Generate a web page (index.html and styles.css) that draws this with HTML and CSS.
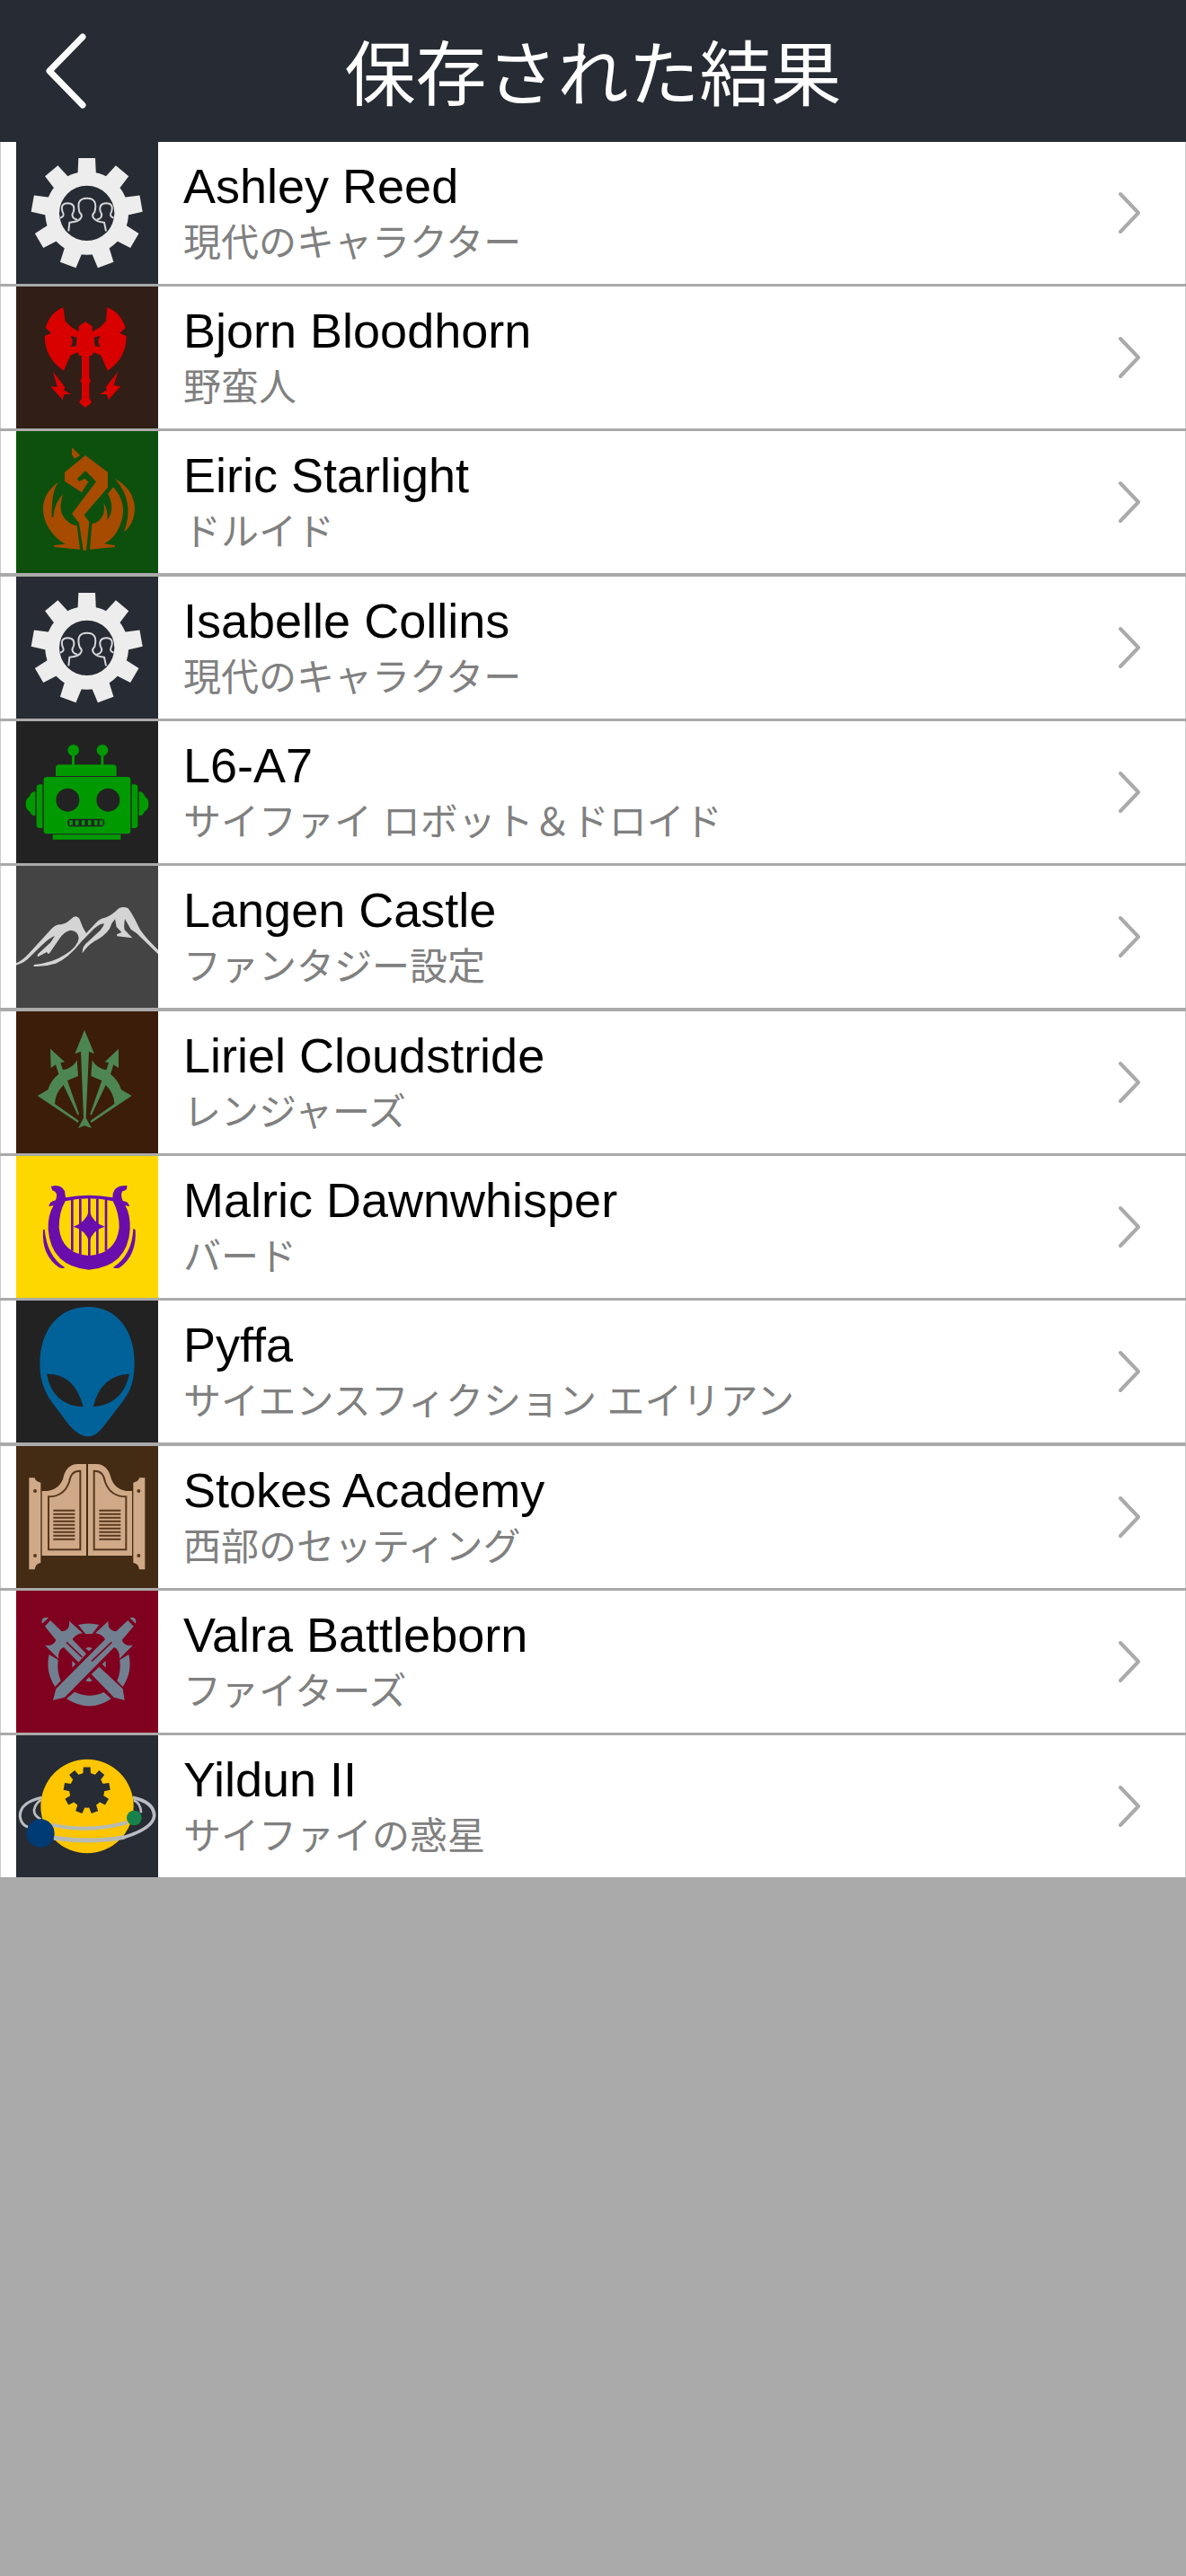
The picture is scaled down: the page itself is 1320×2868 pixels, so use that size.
FILE: index.html
```
<!DOCTYPE html>
<html lang="ja">
<head>
    <meta charset="UTF-8">
    <meta name="viewport" content="width=device-width, initial-scale=1.0">
    <title>保存された結果</title>
    <link rel="stylesheet" href="styles.css">
</head>
<body>
    <!-- Shared shapes -->
    <svg class="defs" width="0" height="0" aria-hidden="true">
        <symbol id="chevron" viewBox="0 0 24 48">
            <path d="M2 3L22 24L2 45" fill="none" stroke="currentColor" stroke-width="4" stroke-linecap="round" stroke-linejoin="round"/>
        </symbol>
        <g id="tooth"><path d="M-31-120L-28-184H28L31-120Z"/></g>
        <g id="teeth">
            <use href="#tooth"/>
            <use href="#tooth" transform="rotate(40)"/>
            <use href="#tooth" transform="rotate(80)"/>
            <use href="#tooth" transform="rotate(120)"/>
            <use href="#tooth" transform="rotate(160)"/>
            <use href="#tooth" transform="rotate(200)"/>
            <use href="#tooth" transform="rotate(240)"/>
            <use href="#tooth" transform="rotate(280)"/>
            <use href="#tooth" transform="rotate(320)"/>
            <circle r="139"/>
        </g>
        <symbol id="modern" viewBox="54 24 474 474">
            <use href="#teeth" transform="translate(290 262)" fill="#ededed"/>
            <circle cx="290" cy="262" r="92" fill="#272b33"/>
            <g fill="none" stroke="#d5d8db" stroke-width="6" stroke-linejoin="round">
                <path d="M229 322L232 293Q266 291 272 274Q274 266 266 260Q252 212 290 212Q328 212 316 258Q304 270 314 280Q324 291 348 293L354 322"/>
                <path d="M201 278Q218 273 209 258Q200 229 226 229Q252 229 246 256Q236 272 248 280L258 284"/>
                <path d="M380 278Q363 273 372 258Q381 229 355 229Q329 229 335 256Q345 272 333 280L323 284"/>
            </g>
        </symbol>
    </svg>

    <header class="header">
        <button class="back-btn" type="button" aria-label="戻る">
            <svg viewBox="0 0 48 84" aria-hidden="true">
                <path d="M43 4L6 42L43 80" fill="none" stroke="currentColor" stroke-width="7" stroke-linecap="round" stroke-linejoin="round"/>
            </svg>
        </button>
        <h1>保存された結果</h1>
    </header>

    <main>
        <ul class="results">
            <li>
                <a class="row" href="#ashley-reed">
                    <svg class="thumb modern" aria-hidden="true"><use href="#modern"/></svg>
                    <span class="text">
                        <span class="name">Ashley Reed</span>
                        <span class="type">現代のキャラクター</span>
                    </span>
                    <svg class="chevron" aria-hidden="true"><use href="#chevron"/></svg>
                </a>
            </li>
            <li>
                <a class="row" href="#bjorn-bloodhorn">
                    <svg class="thumb barbarian" viewBox="54 12 474 474" aria-hidden="true">
                        <g fill="#d90000">
                            <path d="M285 129L308 145V163L334 148L354 128L358 82Q402 98 419 150L400 168L422 177Q422 253 359 293L337 242L313 232L306 243H298V318L303 326L298 336V385L306 400L285 416L264 400L273 385V336L268 326L273 318V243H266L258 232L235 242L213 293Q150 253 149 177L171 168L152 150Q168 98 211 82L218 128L239 148L263 163V145Z"/>
                            <path d="M177 296L217 348L213 358L238 372L215 371L209 390L168 345L191 348Z"/>
                            <path d="M394 296L380 342L403 345L362 390L356 371L332 372L357 358L353 348Z"/>
                        </g>
                        <path d="M235 176L257 182L254 211L235 214Q249 195 235 176ZM335 176L314 182L317 211L335 214Q321 195 335 176Z" fill="#301e17"/>
                    </svg>
                    <span class="text">
                        <span class="name">Bjorn Bloodhorn</span>
                        <span class="type">野蛮人</span>
                    </span>
                    <svg class="chevron" aria-hidden="true"><use href="#chevron"/></svg>
                </a>
            </li>
            <li>
                <a class="row" href="#eiric-starlight">
                    <svg class="thumb druid" viewBox="54 15 474 474" aria-hidden="true">
                        <g fill="#a64b00">
                            <path d="M285 96L360 152V203L281 295L298 319L288 413H278L264 322L240 291L321 184L285 147L258 174L264 183L283 173L295 184L273 220L216 182V152Z"/>
                            <path d="M240 70L268 96L249 107L240 94Z"/>
                            <path d="M195 185Q171 216 173 302H178Q181 254 211 225Q192 276 216 307Q232 327 257 331L267 410L181 402V396L219 392C151 355 103 250 195 185Z"/>
                            <path d="M378 202Q423 252 407 310Q393 367 348 391L384 397V402L300 410L307 325Q334 319 345 293Q350 276 346 254Q360 277 359 313Q386 269 360 224Z"/>
                            <path d="M384 174Q445 208 450 269Q450 322 414 352Q434 298 425 254Q417 212 384 174Z"/>
                        </g>
                    </svg>
                    <span class="text">
                        <span class="name">Eiric Starlight</span>
                        <span class="type">ドルイド</span>
                    </span>
                    <svg class="chevron" aria-hidden="true"><use href="#chevron"/></svg>
                </a>
            </li>
            <li>
                <a class="row" href="#isabelle-collins">
                    <svg class="thumb modern" aria-hidden="true"><use href="#modern"/></svg>
                    <span class="text">
                        <span class="name">Isabelle Collins</span>
                        <span class="type">現代のキャラクター</span>
                    </span>
                    <svg class="chevron" aria-hidden="true"><use href="#chevron"/></svg>
                </a>
            </li>
            <li>
                <a class="row" href="#l6-a7">
                    <svg class="thumb robot" viewBox="54 24 474 474" aria-hidden="true">
                        <g fill="#009a00">
                            <circle cx="245" cy="121" r="19"/>
                            <circle cx="342" cy="121" r="19"/>
                            <path d="M240 130H249V172H240ZM337 130H346V172H337Z"/>
                            <path d="M186 207V180Q186 169 197 169H378Q389 169 389 180V207Z"/>
                            <rect x="146" y="210" width="290" height="190" rx="10"/>
                            <path d="M142 235V381H133Q122 381 122 370V246Q122 235 133 235ZM440 235V381H449Q460 381 460 370V246Q460 235 449 235Z"/>
                            <path d="M118 259V339Q104 341 99 325Q86 320 86 300Q86 282 98 276Q103 259 118 259ZM464 259V339Q478 341 483 325Q496 320 496 300Q496 282 484 276Q479 259 464 259Z"/>
                            <path d="M176 403H403V419H176Z"/>
                        </g>
                        <g fill="#222">
                            <circle cx="226" cy="287" r="39"/>
                            <circle cx="361" cy="287" r="39"/>
                            <rect x="225" y="350" width="124" height="26" rx="12"/>
                        </g>
                        <path d="M237 355V371M257 355V371M278 355V371M299 355V371M320 355V371M338 355V371" stroke="#009a00" stroke-width="11"/>
                    </svg>
                    <span class="text">
                        <span class="name">L6-A7</span>
                        <span class="type">サイファイ ロボット＆ドロイド</span>
                    </span>
                    <svg class="chevron" aria-hidden="true"><use href="#chevron"/></svg>
                </a>
            </li>
            <li>
                <a class="row" href="#langen-castle">
                    <svg class="thumb setting" viewBox="54 12 474 474" aria-hidden="true">
                        <path d="M50 338Q73 331 98 303L173 221Q188 207 204 208Q220 206 237 190Q253 172 265 188L277 218L288 237L319 204Q333 188 355 184Q373 177 397 154Q411 146 427 153Q445 176 462 214Q474 241 528 293V307L456 237L437 224L417 189Q413 211 416 226L442 253L391 247L390 241L406 234L389 216L384 190Q372 202 366 222Q350 246 315 264Q291 279 275 304Q274 280 292 267L335 227Q347 213 347 205Q334 204 313 223L272 265Q226 323 186 338Q148 350 112 348L114 342Q174 337 215 310Q260 282 263 254Q261 228 235 227Q213 232 197 257L168 300L162 307L156 300L128 315Q119 313 134 300L169 268L183 246Q165 252 137 280L91 325Q70 342 50 344Z" fill="#d4d4d4"/>
                    </svg>
                    <span class="text">
                        <span class="name">Langen Castle</span>
                        <span class="type">ファンタジー設定</span>
                    </span>
                    <svg class="chevron" aria-hidden="true"><use href="#chevron"/></svg>
                </a>
            </li>
            <li>
                <a class="row" href="#liriel-cloudstride">
                    <svg class="thumb ranger" viewBox="54 18 474 474" aria-hidden="true">
                        <g fill="#4e8653">
                            <path d="M282 80L315 160L297 152L287 374L306 408L282 400L261 408L279 374L270 152L250 160Z"/>
                            <path d="M168 143L216 187L202 190L210 214Q245 207 257 181L261 234L225 249L264 361L260 365L212 264Q184 291 183 327L263 383L260 390L125 300L160 280Q170 247 196 228L186 196L170 207Z"/>
                            <path d="M396 143L350 187L363 190L355 214Q320 207 308 181L304 234L340 249L301 361L305 365L353 264Q381 291 382 327L302 383L305 390L440 300L405 280Q395 247 369 228L379 196L396 207Z"/>
                        </g>
                    </svg>
                    <span class="text">
                        <span class="name">Liriel Cloudstride</span>
                        <span class="type">レンジャーズ</span>
                    </span>
                    <svg class="chevron" aria-hidden="true"><use href="#chevron"/></svg>
                </a>
            </li>
            <li>
                <a class="row" href="#malric-dawnwhisper">
                    <svg class="thumb bard" viewBox="54 21 474 474" aria-hidden="true">
                        <g fill="#6a0dad">
                            <path d="M170 123Q202 112 216 139L219 160Q297 145 376 160Q376 117 424 120Q427 137 410 138Q400 148 410 171Q431 174 432 190L418 186Q436 217 434 266Q426 389 297 401Q170 389 161 266Q159 219 179 186L163 190Q164 174 186 169Q197 143 175 136ZM218 172Q197 209 197 260Q206 347 297 354Q388 347 398 260Q398 211 377 172Q297 153 218 172Z" fill-rule="evenodd"/>
                            <path d="M298 202Q308 244 350 257Q309 268 298 308Q286 268 245 257Q287 244 298 202Z"/>
                            <path d="M149 266Q157 356 216 393Q215 398 198 394Q138 354 144 268ZM445 264Q441 352 378 393Q379 398 398 395Q458 353 452 267Z"/>
                        </g>
                        <path d="M241 166V338M268 164V350M298 160V354M325 164V350M354 166V338" stroke="#6a0dad" stroke-width="8"/>
                    </svg>
                    <span class="text">
                        <span class="name">Malric Dawnwhisper</span>
                        <span class="type">バード</span>
                    </span>
                    <svg class="chevron" aria-hidden="true"><use href="#chevron"/></svg>
                </a>
            </li>
            <li>
                <a class="row" href="#pyffa">
                    <svg class="thumb alien" viewBox="54 9 474 474" aria-hidden="true">
                        <path d="M291 30C390 28 449 110 449 215C448 280 437 309 408 348L349 425Q322 463 294 463Q263 462 231 425L173 348C146 309 133 271 133 220C134 110 193 32 291 30Z" fill="#006298"/>
                        <path d="M156 254Q250 253 278 364Q175 359 156 254ZM432 254Q337 257 311 364Q411 355 432 254Z" fill="#222"/>
                    </svg>
                    <span class="text">
                        <span class="name">Pyffa</span>
                        <span class="type">サイエンスフィクション エイリアン</span>
                    </span>
                    <svg class="chevron" aria-hidden="true"><use href="#chevron"/></svg>
                </a>
            </li>
            <li>
                <a class="row" href="#stokes-academy">
                    <svg class="thumb western" viewBox="54 15 474 474" aria-hidden="true">
                        <g fill="#d0aa88">
                            <path d="M97 121H116Q118 134 136 137V405Q118 407 116 427H97ZM484 121H465Q463 134 445 137V405Q463 407 465 427H484Z"/>
                            <path d="M140 165Q191 169 210 126Q220 75 260 75H288V381H140ZM441 165Q390 169 372 126Q360 75 322 75H294V381H441Z"/>
                        </g>
                        <g fill="none" stroke="#58381d" stroke-width="6">
                            <path d="M162 361V184Q214 184 231 135Q237 96 268 98V361Z"/>
                            <path d="M421 361V184Q369 184 351 135Q345 96 314 98V361Z"/>
                            <path d="M178 230H250M178 242H250M178 254H250M178 266H250M178 278H250M178 290H250M178 302H250M178 314H250M178 326H250"/>
                            <path d="M331 230H403M331 242H403M331 254H403M331 266H403M331 278H403M331 290H403M331 302H403M331 314H403M331 326H403"/>
                        </g>
                        <g fill="#58381d">
                            <circle cx="117" cy="165" r="6"/>
                            <circle cx="463" cy="165" r="6"/>
                            <circle cx="117" cy="381" r="6"/>
                            <circle cx="463" cy="381" r="6"/>
                        </g>
                    </svg>
                    <span class="text">
                        <span class="name">Stokes Academy</span>
                        <span class="type">西部のセッティング</span>
                    </span>
                    <svg class="chevron" aria-hidden="true"><use href="#chevron"/></svg>
                </a>
            </li>
            <li>
                <a class="row" href="#valra-battleborn">
                    <svg class="thumb fighter" viewBox="54 18 474 474" aria-hidden="true">
                        <g fill="#708090">
                            <path d="M261 132Q296 123 331 132L308 162H285ZM164 231L194 249Q189 286 203 319L184 339Q151 289 164 231ZM430 231L400 249Q405 286 391 319L410 339Q443 289 430 231ZM222 379L249 356Q299 380 347 357L371 379Q300 428 222 379Z"/>
                            <path d="M286 211Q297 203 308 211L297 220ZM286 318Q297 326 308 318L297 307ZM241 252L253 263L241 275ZM353 252L341 263L353 275Z"/>
                            <path d="M168 117L206 154Q235 151 231 119L276 160Q252 163 242 181L288 229L262 257L213 207Q192 215 195 245L150 200Q177 206 187 183L150 137ZM331 272L410 346L416 384L380 374L305 297Z"/>
                            <path d="M427 117L388 154Q358 151 362 119L318 160Q341 163 351 181L187 346L177 384L216 374L381 207Q401 215 399 245L444 200Q417 206 407 183L446 137Z"/>
                            <path d="M141 128L162 109Q149 104 142 112Q138 119 141 128ZM433 109L453 128Q456 119 451 112Q444 105 433 109Z"/>
                        </g>
                        <path d="M222 190L274 240M373 190L306 254" stroke="#80001f" stroke-width="5"/>
                    </svg>
                    <span class="text">
                        <span class="name">Valra Battleborn</span>
                        <span class="type">ファイターズ</span>
                    </span>
                    <svg class="chevron" aria-hidden="true"><use href="#chevron"/></svg>
                </a>
            </li>
            <li>
                <a class="row" href="#yildun-ii">
                    <svg class="thumb planet" viewBox="54 21 474 474" aria-hidden="true">
                        <g fill="none" stroke="#b9bdc3">
                            <path d="M140 229Q65 246 67 292Q70 320 94 328" stroke-width="9"/>
                            <path d="M137 236Q109 257 115 281Q121 294 137 302" stroke-width="8"/>
                            <path d="M443 229Q515 244 515 290Q511 333 410 363" stroke-width="11"/>
                            <path d="M446 238Q470 247 471 280" stroke-width="8"/>
                        </g>
                        <ellipse cx="291" cy="258" rx="155" ry="157" fill="#ffc600"/>
                        <path d="M174 319Q290 349 425 312" fill="none" stroke="#b6bab3" stroke-width="12"/>
                        <path d="M180 364Q304 382 415 361" fill="none" stroke="#b6bab3" stroke-width="15"/>
                        <circle cx="135" cy="348" r="47" fill="#003b75"/>
                        <circle cx="448" cy="297" r="25" fill="#17834b"/>
                        <use href="#teeth" transform="translate(290 205) scale(.42)" fill="#272b33"/>
                    </svg>
                    <span class="text">
                        <span class="name">Yildun II</span>
                        <span class="type">サイファイの惑星</span>
                    </span>
                    <svg class="chevron" aria-hidden="true"><use href="#chevron"/></svg>
                </a>
            </li>
        </ul>
    </main>
</body>
</html>
```

FILE: styles.css
```
* {
    box-sizing: border-box;
}
body {
    margin: 0;
    background: #aaaaaa;
    font-family: "Liberation Sans", "Noto Sans CJK JP", sans-serif;
}
.defs {
    position: absolute;
}
.header {
    display: grid;
    grid-template-columns: 148px 1fr 148px;
    align-items: center;
    height: 158px;
    background: #272b33;
    color: white;
}
.header h1 {
    margin: 0;
    padding-top: 12px;
    font-size: 79px;
    font-weight: 400;
    line-height: 100px;
    text-align: center;
}
.back-btn {
    display: flex;
    align-items: center;
    height: 100%;
    padding: 0 49px;
    border: none;
    background: none;
    color: inherit;
    cursor: pointer;
}
.back-btn svg {
    width: 48px;
    height: 84px;
}
.results {
    margin: 0;
    padding: 0;
    list-style: none;
}
.results li {
    margin-bottom: 3px;
}
.results li:nth-child(3n) {
    margin-bottom: 4px;
}
.row {
    display: flex;
    align-items: center;
    padding: 0 50px 0 17px;
    border: solid #cccccc;
    border-width: 0 1px;
    background: white;
    color: black;
    text-decoration: none;
}
.thumb {
    flex: none;
    width: 158px;
    height: 158px;
}
.text {
    flex: 1;
    display: flex;
    flex-direction: column;
    padding: 3px 0 0 28px;
}
.name {
    font-size: 54px;
    line-height: 64px;
}
.type {
    color: #808080;
    font-size: 42px;
    line-height: 64px;
}
.chevron {
    flex: none;
    width: 24px;
    height: 48px;
    color: #aaaaaa;
}

/* Thumbnail backgrounds */
.modern,
.planet {
    background: #272b33;
}
.barbarian {
    background: #301e17;
}
.druid {
    background: #0d500d;
}
.robot,
.alien {
    background: #222222;
}
.setting {
    background: #444444;
}
.ranger {
    background: #3b1d09;
}
.bard {
    background: #ffd700;
}
.western {
    background: #432b14;
}
.fighter {
    background: #80001f;
}
```
